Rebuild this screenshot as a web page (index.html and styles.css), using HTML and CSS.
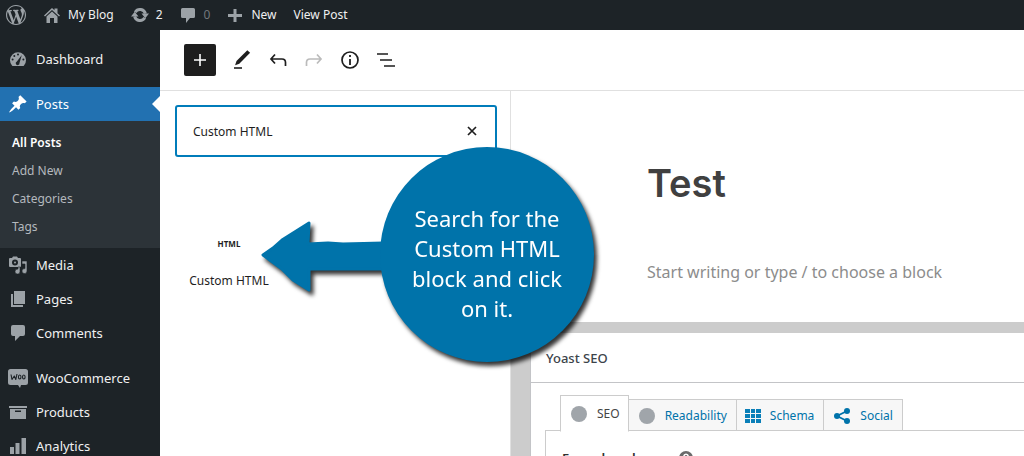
FILE: index.html
```html
<!DOCTYPE html>
<html lang="en">
<head>
<meta charset="utf-8">
<title>Edit Post - My Blog</title>
<link rel="stylesheet" href="styles.css">
</head>
<body>
<header class="adminbar">
  <a class="bar-item bar-logo" href="#" aria-label="About WordPress"><svg width="20" height="20" viewBox="0 0 20 20"><path fill="#9ca2a7" d="M20 10c0-5.51-4.49-10-10-10C4.480 0 0 4.490 0 10c0 5.520 4.480 10 10 10 5.510 0 10-4.480 10-10zM7.780 15.370L4.370 6.220c.55-.02 1.170-.08 1.170-.08.5-.06.44-1.130-.06-1.110 0 0-1.450.11-2.370.11-.18 0-.37 0-.58-.01C4.120 2.690 6.870 1.110 10 1.110c2.330 0 4.450.87 6.050 2.340-.68-.11-1.650.39-1.650 1.580 0 .74.45 1.360.9 2.100.35.61.55 1.360.55 2.460 0 1.490-1.400 5-1.400 5l-3.030-8.370c.54-.02.82-.17.82-.17.5-.05.44-1.250-.06-1.220 0 0-1.440.12-2.380.12-.87 0-2.330-.12-2.330-.12-.5-.03-.56 1.200-.06 1.220l.92.08 1.260 3.410zM17.410 10c.24-.64.74-1.870.43-4.250.7 1.290 1.050 2.710 1.050 4.250 0 3.290-1.730 6.240-4.400 7.780.97-2.590 1.940-5.200 2.920-7.780zM6.100 18.090C3.120 16.650 1.110 13.530 1.110 10c0-1.300.23-2.480.72-3.590C3.250 10.300 4.670 14.200 6.100 18.090zm4.030-6.630l2.580 6.980c-.86.29-1.760.45-2.710.45-.79 0-1.570-.11-2.290-.33.81-2.380 1.620-4.740 2.420-7.100z"/></svg></a>
  <a class="bar-item" href="#"><svg width="18" height="18" viewBox="0 0 18 18"><g fill="#9ca2a7"><path d="M1 9.500L9 2l2.500 2.300V2.500h3v4.700L17 9.500l-1 1-7-6.500-7 6.500z"/><path d="M3.500 10.500L9 5.500l5.500 5V17H11v-5H7v5H3.500z"/></g></svg><span>My Blog</span></a>
  <a class="bar-item" href="#"><svg width="18" height="18" viewBox="0 0 18 18"><g fill="none" stroke="#9ca2a7" stroke-width="3"><path d="M4.200 6.200a5.600 5.600 0 0 1 10.200 1.500M13.800 11.800A5.600 5.600 0 0 1 3.600 10.300"/></g><path fill="#9ca2a7" d="M10.500 7.500H18l-3.700 4.700zM0 10.500h7.500L3.700 5.800z"/></svg><span>2</span></a>
  <a class="bar-item bar-muted" href="#"><svg width="16" height="18" viewBox="0 0 16 18"><path fill="#9ca2a7" d="M2.500 2h11a1.500 1.500 0 0 1 1.500 1.500v7a1.500 1.500 0 0 1-1.500 1.500H10l-4 5v-5H2.500A1.500 1.500 0 0 1 1 10.500v-7A1.500 1.500 0 0 1 2.500 2z"/></svg><span>0</span></a>
  <a class="bar-item bar-new" href="#"><svg width="16" height="16" viewBox="0 0 16 16"><path fill="#9ca2a7" d="M6.500 2h3v5H15v3H9.500v5h-3v-5H1V7h5.500z"/></svg><span>New</span></a>
  <a class="bar-item" href="#">View Post</a>
</header>
<div class="layout">
  <nav class="menu" aria-label="Main menu">
    <a class="menu-item" href="#"><svg width="20" height="20" viewBox="0 0 20 20"><path fill="#9ca2a7" d="M4 16.500a8 8 0 1 1 12 0q-.4.500-1 .500H5q-.6 0-1-.500z"/><g fill="#1d2327"><circle cx="10" cy="5.500" r="1"/><circle cx="6.300" cy="7" r="1"/><circle cx="4.600" cy="10.500" r="1"/><circle cx="15.400" cy="10.500" r="1"/><path d="M13.800 6L11.500 14a1.900 1.900 0 1 1-2.600-1.500z"/></g></svg><span>Dashboard</span></a>
    <div class="gap"></div>
    <a class="menu-item current" href="#"><svg width="20" height="20" viewBox="0 0 20 20"><path fill="#fff" d="M10.440 3.020l1.820-1.820 6.360 6.350-1.830 1.820c-1.050-.68-2.480-.57-3.410.36l-.75.75c-.92.930-1.040 2.350-.35 3.410l-1.830 1.820-2.410-2.410-2.800 2.790c-.42.42-3.380 2.710-3.800 2.290s1.860-3.390 2.280-3.810l2.790-2.790L4.100 9.360l1.830-1.820c1.050.69 2.480.57 3.400-.36l.75-.75c.93-.92 1.050-2.350.36-3.410z"/></svg><span>Posts</span></a>
    <div class="submenu">
      <a class="on" href="#">All Posts</a><a href="#">Add New</a><a href="#">Categories</a><a href="#">Tags</a>
    </div>
    <a class="menu-item" href="#"><svg width="20" height="20" viewBox="0 0 20 20"><g fill="#9ca2a7"><path fill-rule="evenodd" d="M2 3h2l1-1.500h4L10 3h2q1 0 1 1v7q0 1-1 1H2q-1 0-1-1V4q0-1 1-1zm5 1.500a3 3 0 1 0 0 6 3 3 0 0 0 0-6z"/><circle cx="7" cy="7.500" r="1"/><path stroke="#1d2327" stroke-width=".6" d="M14 6h5v10a2.500 2.500 0 1 1-2-2.400V9h-3zM12 12v4.500a2.500 2.500 0 1 1-2-2.400V12z"/></g></svg><span>Media</span></a>
    <a class="menu-item" href="#"><svg width="20" height="20" viewBox="0 0 20 20"><path fill="#9ca2a7" d="M6 2h11v13H6zM3 5h2v11h10v2H3z"/></svg><span>Pages</span></a>
    <a class="menu-item" href="#"><svg width="20" height="20" viewBox="0 0 20 20"><path fill="#9ca2a7" d="M5 2h10q2 0 2 2v7q0 2-2 2h-3l-5 5v-5H5q-2 0-2-2V4q0-2 2-2z"/></svg><span>Comments</span></a>
    <div class="gap"></div>
    <a class="menu-item" href="#"><svg width="20" height="20" viewBox="0 0 20 20"><path fill="#9ca2a7" d="M2.500 1h15Q20 1 20 3.500v11q0 2.500-2.500 2.500H13l-1 3-2-3H2.500Q0 17 0 14.500v-11Q0 1 2.500 1z"/><g fill="none" stroke="#1d2327" stroke-width="1.100" stroke-linejoin="round"><path d="M3 6.500l1 5L6.300 8l1.500 3.500L9 6"/><ellipse cx="11.700" cy="9" rx="1.300" ry="2"/><ellipse cx="15.800" cy="9" rx="1.300" ry="2"/></g></svg><span>WooCommerce</span></a>
    <a class="menu-item" href="#"><svg width="20" height="20" viewBox="0 0 20 20"><path fill="#9ca2a7" fill-rule="evenodd" d="M1 4h18v2H1zM2 7h16v10H2zm5 1.500V10h6V8.500z"/></svg><span>Products</span></a>
    <a class="menu-item" href="#"><svg width="20" height="20" viewBox="0 0 20 20"><path fill="#9ca2a7" d="M2 11h4v7H2zm5.500-4h4v11h-4zM13.500 2H18v16h-4.500z"/></svg><span>Analytics</span></a>
  </nav>
  <div class="editor">
    <div class="toolbar">
      <button class="tool add" aria-label="Add block"><svg width="24" height="24" viewBox="0 0 24 24"><path stroke="#fff" stroke-width="1.600" d="M12 6v12M6 12h12"/></svg></button>
      <button class="tool" aria-label="Tools"><svg width="24" height="24" viewBox="0 0 24 24"><path fill="#1e1e1e" d="M17.300 2.300l2.800 2.500-10.800 11-4.200 1.400L6.500 13z"/><path stroke="#1e1e1e" stroke-width="1.600" d="M4 20h8"/></svg></button>
      <button class="tool" aria-label="Undo"><svg width="24" height="24" viewBox="0 0 24 24"><path fill="none" stroke="#1e1e1e" stroke-width="1.700" d="M9 6.500L5 11l4 4.500M5 11h11q3.500 0 3.500 3.500V18"/></svg></button>
      <button class="tool" aria-label="Redo" disabled><svg width="24" height="24" viewBox="0 0 24 24"><path fill="none" stroke="#bbb" stroke-width="1.700" d="M15 6.500l4 4.500-4 4.500M19 11H8q-3.500 0-3.500 3.500V18"/></svg></button>
      <button class="tool" aria-label="Details"><svg width="24" height="24" viewBox="0 0 24 24"><circle cx="12" cy="12" r="8" fill="none" stroke="#1e1e1e" stroke-width="1.700"/><path stroke="#1e1e1e" stroke-width="1.800" d="M12 7v2M12 11v6"/></svg></button>
      <button class="tool" aria-label="List view"><svg width="24" height="24" viewBox="0 0 24 24"><path stroke="#1e1e1e" stroke-width="1.500" d="M3 6h11M6 12h12M10 18h11"/></svg></button>
    </div>
    <div class="workspace">
      <aside class="inserter">
        <div class="search">
          <input type="text" value="Custom HTML" aria-label="Search for a block">
          <button class="clear" aria-label="Reset search"><svg width="24" height="24" viewBox="0 0 24 24"><path stroke="#1e1e1e" stroke-width="1.700" d="M8 8l8 8M16 8l-8 8"/></svg></button>
        </div>
        <button class="block"><span class="block-icon">HTML</span><span>Custom HTML</span></button>
      </aside>
      <main class="content">
        <article class="post">
          <h1>Test</h1>
          <p>Start writing or type / to choose a block</p>
        </article>
        <section class="metaboxes">
          <div class="metabox">
            <h2>Yoast SEO</h2>
            <div class="yoast">
              <div class="tabs">
                <a class="tab selected" href="#"><svg width="16" height="16" viewBox="0 0 16 16"><circle cx="8" cy="8" r="8" fill="#a0a5aa"/></svg><span>SEO</span></a>
                <a class="tab" href="#"><svg width="16" height="16" viewBox="0 0 16 16"><circle cx="8" cy="8" r="8" fill="#a0a5aa"/></svg><span>Readability</span></a>
                <a class="tab tight" href="#"><svg width="16" height="16" viewBox="0 0 16 16"><path fill="#0a7fb8" d="M0 1h5v4H0zm6 0h4v4H6zm5 0h5v4h-5zM0 6h5v4H0zm6 0h4v4H6zm5 0h5v4h-5zM0 11h5v4H0zm6 0h4v4H6zm5 0h5v4h-5z"/></svg><span>Schema</span></a>
                <a class="tab" href="#"><svg width="16" height="16" viewBox="0 0 16 16"><path fill="none" stroke="#0073aa" stroke-width="1.800" d="M13 3L3 8l10 5"/><g fill="#0073aa"><circle cx="13" cy="3" r="3"/><circle cx="3" cy="8" r="3"/><circle cx="13" cy="13" r="3"/></g></svg><span>Social</span></a>
              </div>
              <div class="panel"><span>Focus keyphrase</span><svg width="14" height="14" viewBox="0 0 14 14"><circle cx="7" cy="7" r="7" fill="#6b6b6b"/><path fill="none" stroke="#fff" stroke-width="1.600" d="M4.800 5.500Q5 3.300 7 3.300t2.200 1.900Q9.200 6.500 7 7.500v1.200M7 10v1.500"/></svg></div>
            </div>
          </div>
        </section>
      </main>
    </div>
  </div>
</div>
<div class="callout">
  <svg class="arrow" width="130" height="80" viewBox="0 0 130 80"><path fill="#0073aa" stroke="#0073aa" stroke-width="3" stroke-linejoin="round" d="M4 40L14 33l9-8L50 8l-1 21 20-1 15 1 41-1v26H50v21l-16-10-11-11z"/></svg>
  <div class="bubble">Search for the<br>Custom HTML<br>block and click<br>on it.</div>
</div>
</body>
</html>
```
FILE: styles.css
```css
* { box-sizing: border-box; }
body {
  margin: 0;
  height: 100vh;
  overflow: hidden;
  display: flex;
  flex-direction: column;
  background: #fff;
  color: #1e1e1e;
  font: 13px/20px "Noto Sans", "Open Sans", sans-serif;
}
a { text-decoration: none; color: inherit; }
button { border: 0; padding: 0; background: none; color: inherit; font: inherit; }
svg { display: block; flex: none; }
h1, h2, p { margin: 0; }

.adminbar {
  flex: none;
  display: flex;
  align-items: center;
  gap: 17px;
  height: 30px;
  padding: 0 6px;
  background: #1d2327;
  color: #f0f0f1;
  font-size: 12px;
}
.bar-item { display: flex; align-items: center; gap: 7px; }
.bar-muted { color: #72777c; gap: 8px; }
.bar-new { gap: 8px; }

.layout { flex: 1; display: flex; min-height: 0; }
.menu {
  flex: none;
  width: 160px;
  padding-top: 12px;
  overflow: hidden;
  background: #1d2327;
  color: #f0f0f1;
}
.menu-item {
  display: flex;
  align-items: center;
  gap: 8px;
  height: 34px;
  padding-left: 8px;
}
.gap { height: 11px; }
.current { background: #2271b1; color: #fff; }
.current::after {
  content: "";
  margin-left: auto;
  border: 8px solid transparent;
  border-left: 0;
  border-right-color: #fff;
}
.submenu { padding: 8px 12px 7px; background: #2c3338; color: #b4b9be; font-size: 12px; }
.submenu a { display: block; line-height: 28px; }
.submenu .on { color: #fff; font-weight: 600; }

.editor { flex: 1; min-width: 0; display: flex; flex-direction: column; }
.toolbar {
  flex: none;
  display: flex;
  align-items: center;
  gap: 4px;
  height: 61px;
  padding-left: 24px;
  border-bottom: 1px solid #e0e0e0;
}
.tool { display: grid; place-items: center; width: 32px; height: 32px; }
.add { margin-right: 6px; border-radius: 2px; background: #1e1e1e; }

.workspace { flex: 1; display: flex; min-height: 0; }
.inserter {
  flex: none;
  width: 351px;
  padding: 14px 13px 0 15px;
  border-right: 1px solid #e0e0e0;
}
.search {
  display: flex;
  align-items: center;
  height: 52px;
  padding: 0 11px 0 16px;
  border: 2px solid #007cba;
  border-radius: 3px;
}
.search input {
  flex: 1;
  min-width: 0;
  padding: 2px 0 0;
  border: 0;
  outline: 0;
  background: none;
  color: #1e1e1e;
  font: 12px/20px "Noto Sans", "Open Sans", sans-serif;
}
.block {
  display: flex;
  flex-direction: column;
  align-items: center;
  gap: 17px;
  margin-top: 77px;
  width: 108px;
  font-size: 12px;
}
.block-icon { font-size: 8px; font-weight: 700; }

.content { flex: 1; min-width: 0; display: flex; flex-direction: column; }
.post { flex: none; height: 231px; padding: 66px 16px 0 136px; }
.post h1 { color: #404040; font: 600 38px/52px Inter, sans-serif; }
.post p { margin-top: 50px; color: #8c8c8c; font: 16px/26px "Noto Sans", sans-serif; }
.metaboxes { flex: 1; padding: 11px 0 0 19px; background: #ccc; }
.metabox { height: 100%; border-left: 1px solid #c3c4c7; background: #fff; }
.metabox h2 {
  padding: 1px 15px 0;
  border-bottom: 1px solid #c3c4c7;
  color: #3c434a;
  font-size: 13px;
  font-weight: 500;
  line-height: 48px;
}
.yoast { padding: 12px 0 0 14px; }
.tabs { display: flex; align-items: flex-end; padding-left: 15px; font-size: 12px; }
.tab {
  display: flex;
  align-items: center;
  gap: 10px;
  height: 32px;
  padding: 2px 9px 0 10px;
  border: 1px solid #ccc;
  border-left: 0;
  background: #f7f7f7;
  color: #0073aa;
}
.selected {
  position: relative;
  height: 37px;
  margin-bottom: -1px;
  padding: 0 8px 0 10px;
  border-left: 1px solid #ccc;
  border-bottom-color: #fff;
  background: #fff;
  color: #444;
}
.tight { gap: 9px; padding-left: 8px; }
.panel {
  display: flex;
  align-items: center;
  gap: 12px;
  margin-top: -1px;
  padding: 17px 16px;
  border: 1px solid #ccc;
  border-right: 0;
  color: #303030;
  font-weight: 600;
}

.callout {
  position: absolute;
  left: 259px;
  top: 147px;
  display: flex;
  align-items: center;
  filter: drop-shadow(3px 4px 2px rgba(0, 0, 0, .8));
}
.arrow { margin-right: -9px; }
.bubble {
  display: grid;
  place-content: center;
  width: 214px;
  height: 215px;
  padding-top: 16px;
  border-radius: 50%;
  background: #0073aa;
  color: #fff;
  text-align: center;
  font: 22px/30px "Noto Sans", sans-serif;
}
```
